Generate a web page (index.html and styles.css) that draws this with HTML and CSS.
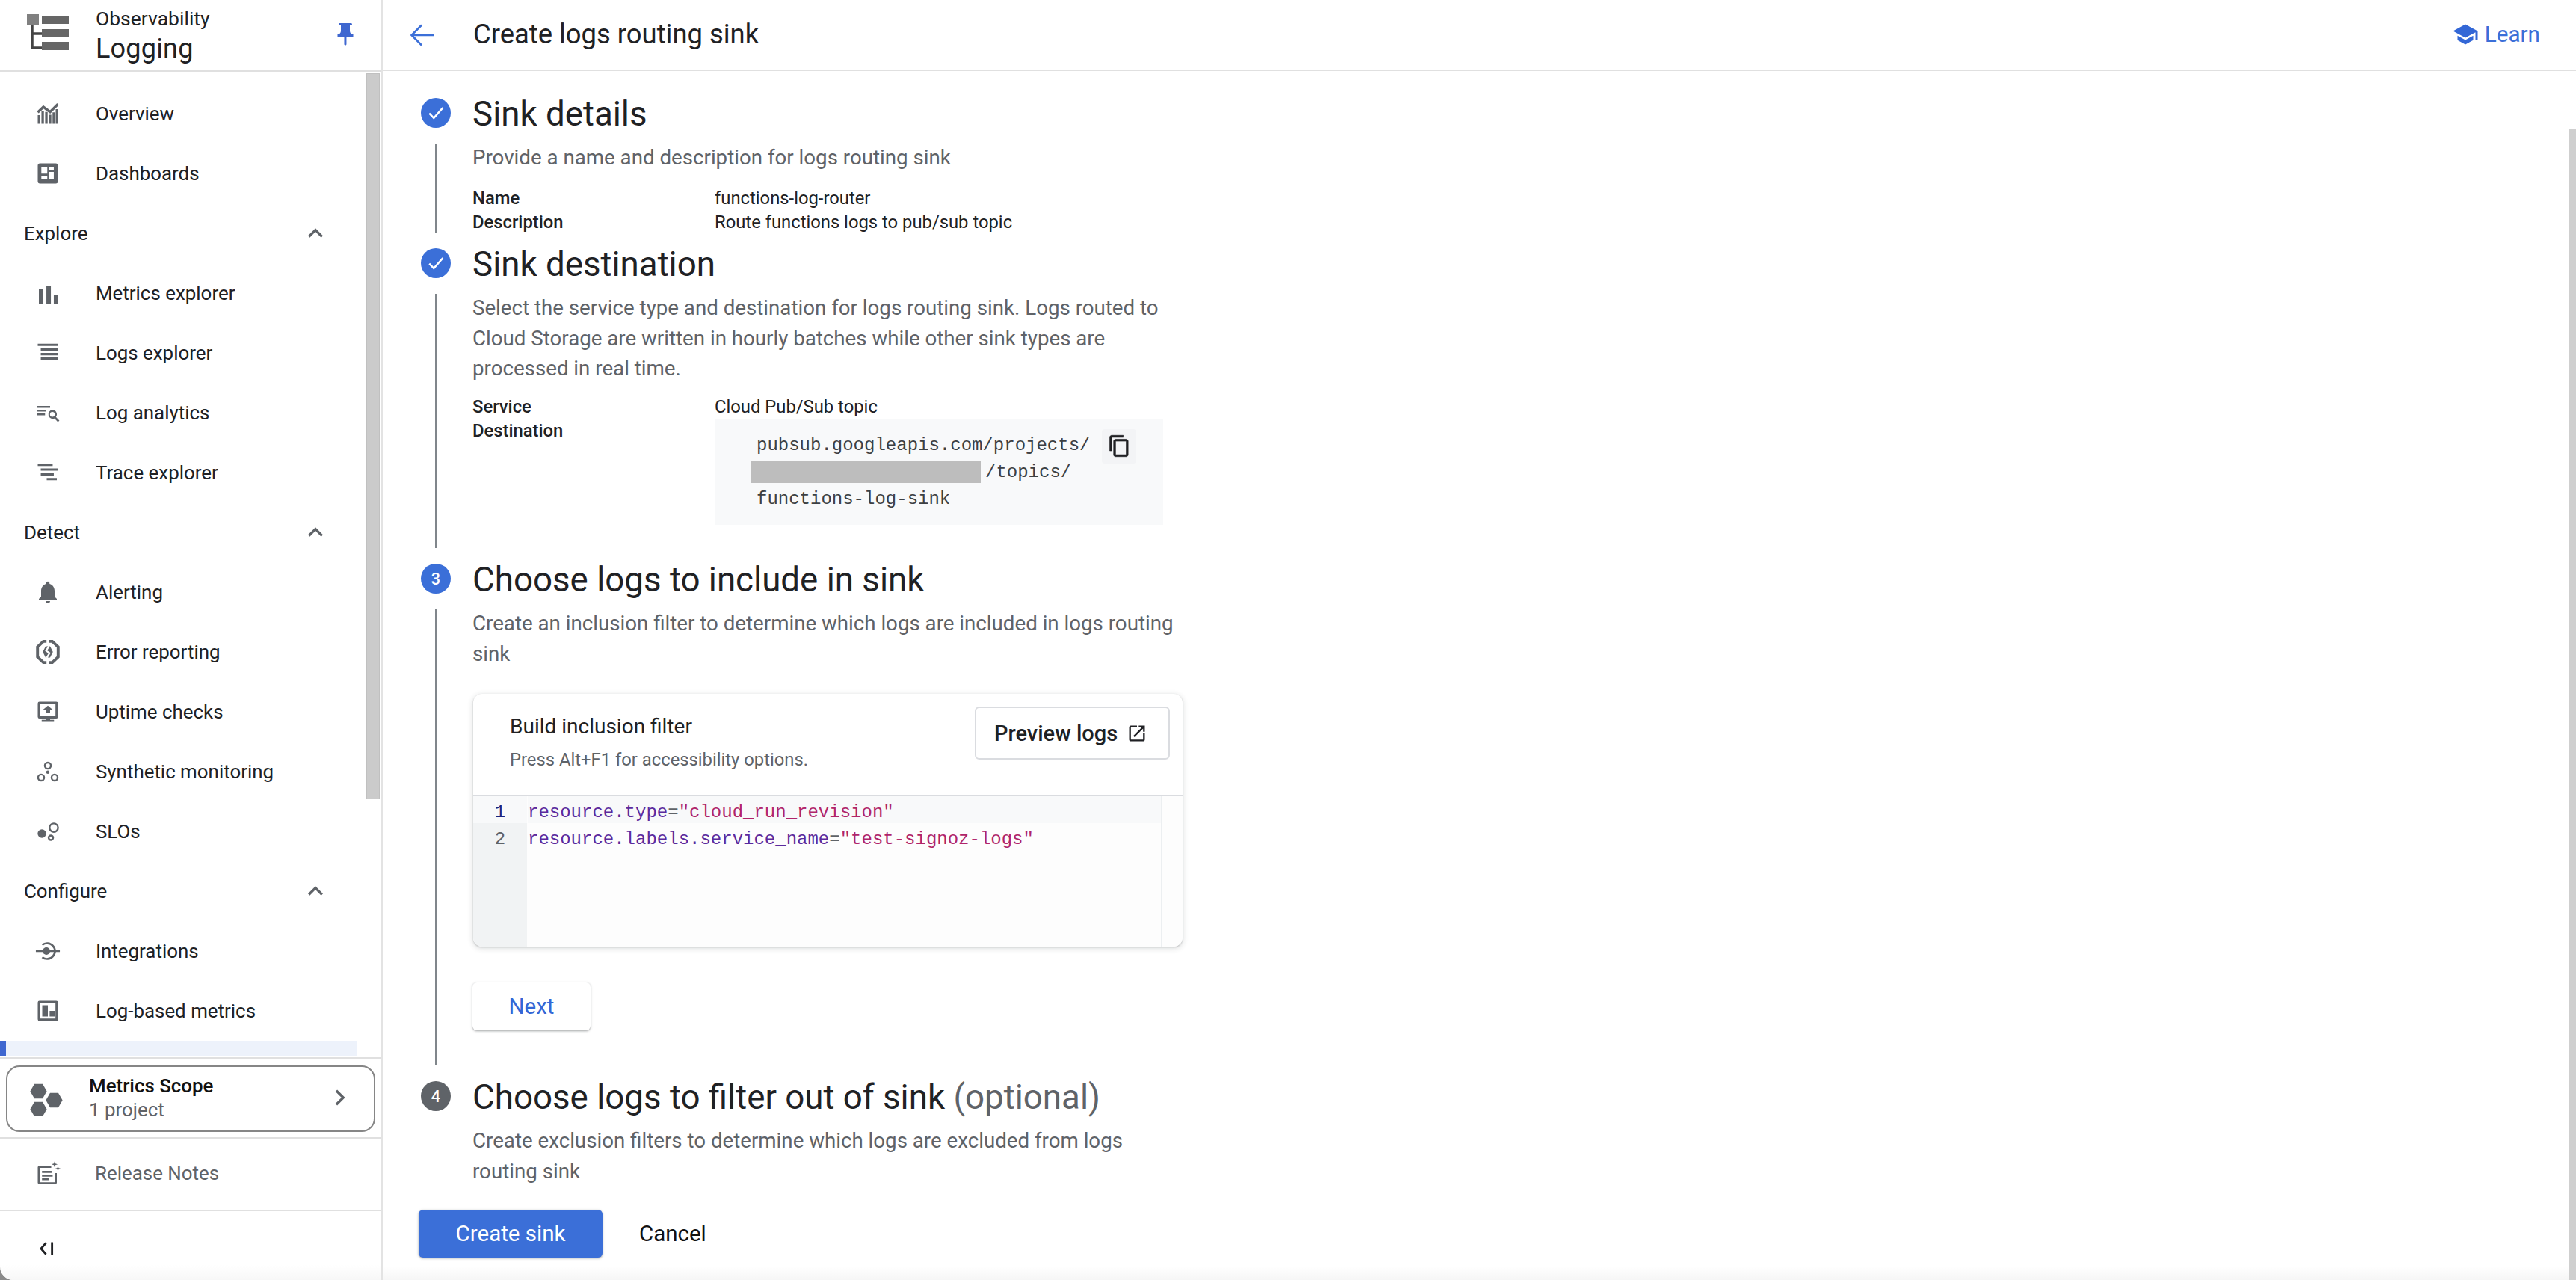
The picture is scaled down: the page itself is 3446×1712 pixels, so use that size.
FILE: index.html
```html
<!DOCTYPE html>
<html lang="en">
<head>
<meta charset="utf-8">
<title>Create logs routing sink</title>
<link rel="stylesheet" href="styles.css">
</head>
<body>
<div class="app">
  <aside class="sidebar">
    <header class="side-head">
      <svg class="logo" viewBox="0 0 56 54"><rect x="0" y="0" width="16" height="14" fill="#808080"/><rect x="20" y="2" width="36" height="11" fill="#666"/><rect x="20" y="20" width="36" height="11" fill="#666"/><rect x="20" y="37" width="36" height="11" fill="#666"/><path d="M7 14v31h13M7 26h13" fill="none" stroke="#444" stroke-width="3.500"/></svg>
      <div class="side-titles">
        <div class="side-kicker">Observability</div>
        <div class="side-title">Logging</div>
      </div>
      <svg class="pin" viewBox="0 0 24 24"><path d="M16 9V4h1c.55 0 1-.45 1-1s-.45-1-1-1H7c-.55 0-1 .45-1 1s.45 1 1 1h1v5c0 1.660-1.340 3-3 3v2h5.970v7l1 1 1-1v-7H19v-2c-1.660 0-3-1.340-3-3z"/></svg>
    </header>
    <nav class="nav">
      <div class="scrollthumb"></div>
      <a class="row"><svg class="ico" viewBox="0 0 24 24"><path d="M3 10.800l5-4.800 6 4.500 7-7" fill="none" stroke="#5f6368" stroke-width="2.300"/><path d="M3 13.300h2.200V21H3zM6.300 10h2.200v11H6.300zM9.600 10.500h2.200V21H9.600zM12.900 13h2.200v8h-2.200zM16.200 10.800h2.200V21h-2.200zM19 8h2.200v13H19z"/></svg><span>Overview</span></a>
      <a class="row"><svg class="ico" viewBox="0 0 24 24"><path fill-rule="evenodd" d="M5 3h14a2 2 0 0 1 2 2v14a2 2 0 0 1-2 2H5a2 2 0 0 1-2-2V5a2 2 0 0 1 2-2zm1.200 3.500v5.700h5.300V6.500zm0 7.500v3.300h5.300V14zM12.900 6.500V9h4.400V6.500zm0 4.200v6.600h4.400v-6.600z"/></svg><span>Dashboards</span></a>
      <div class="group"><span>Explore</span><svg class="chev" viewBox="0 0 24 24"><path d="M12 8l-6 6 1.410 1.410L12 10.830l4.590 4.580L18 14z"/></svg></div>
      <a class="row"><svg class="ico" viewBox="0 0 24 24"><path d="M4 8.700h4v12.600H4zM10.700 5.300h4v16h-4zM17.300 13.300h4v8h-4z"/></svg><span>Metrics explorer</span></a>
      <a class="row"><svg class="ico" viewBox="0 0 24 24"><path d="M3 3.800h18v2H3zM5.700 8H21v2.200H5.700zM5.700 12H21v2.200H5.700zM5.700 16H21v2.200H5.700z"/></svg><span>Logs explorer</span></a>
      <a class="row"><svg class="ico" viewBox="0 0 24 24"><path d="M2.500 6h11.500v1.700H2.500zM2.500 9.300h8v1.700h-8zM2.500 12.600h7v1.700h-7zM16 9.500a4 4 0 0 1 3.200 6.400l3.100 3.100-1.300 1.300-3.100-3.100A4 4 0 1 1 16 9.500zm0 1.900a2.100 2.100 0 1 0 0 4.200 2.100 2.100 0 0 0 0-4.200z"/></svg><span>Log analytics</span></a>
      <a class="row"><svg class="ico" viewBox="0 0 24 24"><path d="M3 4h13.300v2.100H3zM5.700 8.300h15.600v2.100H5.700zM5.700 12.600h11.600v2.100H5.700zM11 16.800h9v2.100h-9z"/></svg><span>Trace explorer</span></a>
      <div class="group"><span>Detect</span><svg class="chev" viewBox="0 0 24 24"><path d="M12 8l-6 6 1.410 1.410L12 10.830l4.590 4.580L18 14z"/></svg></div>
      <a class="row"><svg class="ico" viewBox="0 0 24 24"><path d="M12 22c1.100 0 2-.9 2-2h-4c0 1.100.89 2 2 2zm6-6v-5c0-3.070-1.640-5.640-4.500-6.320V4c0-.83-.67-1.500-1.500-1.500s-1.500.67-1.500 1.500v.68C7.630 5.360 6 7.920 6 11v5l-2 2v1h16v-1l-2-2z"/></svg><span>Alerting</span></a>
      <a class="row"><svg class="ico" viewBox="0 0 24 24"><path d="M10.800 2.600H8L2.800 7.500v9L8 21.400h2.800M13.200 2.600H16l5.200 4.900v9L16 21.400h-2.800" fill="none" stroke="#5f6368" stroke-width="2.600"/><path d="M7.500 12L10 7h4l2.500 5-2.500 5h-4z"/><path d="M13 6.800l-2.500 4.200 3 2-2.500 4.200" fill="none" stroke="#fff" stroke-width="1.500"/></svg><span>Error reporting</span></a>
      <a class="row"><svg class="ico" viewBox="0 0 24 24"><path fill-rule="evenodd" d="M4.500 3h15A1.500 1.500 0 0 1 21 4.500v12a1.500 1.500 0 0 1-1.500 1.500H14v1.200h3.500V21h-11v-1.800H10V18H4.500A1.500 1.500 0 0 1 3 16.500v-12A1.500 1.500 0 0 1 4.500 3zm.7 2.200v10.600h13.600V5.200zM12 6.500l5 4.200h-3v2.600h-4v-2.600H7z"/></svg><span>Uptime checks</span></a>
      <a class="row"><svg class="ico" viewBox="0 0 24 24"><g fill="none" stroke="#5f6368" stroke-width="1.600"><circle cx="12" cy="6.700" r="2.700"/><circle cx="6" cy="17.300" r="2.700"/><circle cx="18" cy="17.300" r="2.700"/></g><circle cx="12" cy="12.500" r="1.500"/></svg><span>Synthetic monitoring</span></a>
      <a class="row"><svg class="ico" viewBox="0 0 24 24"><circle cx="6.700" cy="14" r="3.800"/><g fill="none" stroke="#5f6368" stroke-width="1.600"><circle cx="17.300" cy="8.700" r="3.800"/><circle cx="14.700" cy="17.700" r="2"/></g></svg><span>SLOs</span></a>
      <div class="group"><span>Configure</span><svg class="chev" viewBox="0 0 24 24"><path d="M12 8l-6 6 1.410 1.410L12 10.830l4.590 4.580L18 14z"/></svg></div>
      <a class="row"><svg class="ico" viewBox="0 0 24 24"><path d="M1.300 11.100h21.400v1.800H1.300z"/><circle cx="10.700" cy="12" r="3.300"/><path d="M7 6.500a7 7 0 1 1 0 11" fill="none" stroke="#5f6368" stroke-width="1.800"/></svg><span>Integrations</span></a>
      <a class="row"><svg class="ico" viewBox="0 0 24 24"><path fill-rule="evenodd" d="M4.500 3h15A1.500 1.500 0 0 1 21 4.500v15a1.500 1.500 0 0 1-1.500 1.500h-15A1.500 1.500 0 0 1 3 19.500v-15A1.500 1.500 0 0 1 4.500 3zm.7 2.200v13.600h13.600V5.200zM7 7h5v10H7zm6.600 5H18v5h-4.400z"/></svg><span>Log-based metrics</span></a>
      <div class="row-selected"></div>
    </nav>
    <div class="scope-wrap">
      <button class="scope">
        <svg class="hexes" viewBox="0 0 44 44"><path d="M6 .8h11l5.600 9.700-5.600 9.700H6L.4 10.500z"/><path d="M6 .8h11l5.600 9.700-5.600 9.700H6L.4 10.500z" transform="translate(21 12)"/><path d="M6 .8h11l5.600 9.700-5.600 9.700H6L.4 10.500z" transform="translate(0 24)"/></svg>
        <span class="scope-text"><b>Metrics Scope</b><small>1 project</small></span>
        <svg class="scope-chev" viewBox="6 4 12 16"><path d="M9.400 5L7.800 6.600l5.400 5.400-5.400 5.400L9.400 19l7-7z"/></svg>
      </button>
    </div>
    <a class="release"><svg class="ico" viewBox="0 0 24 24"><path fill-rule="evenodd" d="M4.500 5.300h10.500V7.300H5v12.900h13V12h2v8.500a1.500 1.500 0 0 1-1.500 1.500h-14A1.500 1.500 0 0 1 3 20.500V6.800a1.500 1.500 0 0 1 1.500-1.500zM6.800 10h8.500v1.800H6.800zm0 3.300h9.500v1.800H6.800zm0 3.300h6v1.800h-6z"/><path d="M18 1.500l.7 2 2 .7-2 .7-.7 2-.7-2-2-.7 2-.7zM21 5.500l.6 1.900 1.900.6-1.900.6-.6 1.900-.6-1.900-1.900-.6 1.900-.6z"/></svg><span>Release Notes</span></a>
    <div class="collapse"><svg viewBox="0 0 20 18"><path d="M9 1L2 9l7 8" fill="none" stroke="#202124" stroke-width="3"/><path d="M16 0h3v18h-3z" fill="#202124"/></svg></div>
  </aside>

  <main class="main">
    <header class="topbar">
      <svg class="back" viewBox="0 0 32 32"><path d="M32 16H3M16 2.500L2.500 16 16 29.500" fill="none" stroke="#3b6fd8" stroke-width="2.600"/></svg>
      <h1>Create logs routing sink</h1>
      <a class="learn"><svg viewBox="0 0 24 24"><path d="M5 13.180v4L12 21l7-3.820v-4L12 17l-7-3.820zM12 3L1 9l11 6 9-4.910V17h2V9L12 3z"/></svg>Learn</a>
    </header>
    <div class="content">
      <div class="thumb-main"></div>

      <section class="step step-1">
        <div class="rail"><span class="badge"><svg viewBox="0 0 24 24"><path d="M5 12.500l4.800 5L19.500 6.500" fill="none" stroke="#fff" stroke-width="1.900"/></svg></span><i></i></div>
        <div class="step-body">
          <h2>Sink details</h2>
          <p class="desc">Provide a name and description for logs routing sink</p>
          <dl class="kv"><dt>Name</dt><dd>functions-log-router</dd><dt>Description</dt><dd>Route functions logs to pub/sub topic</dd></dl>
        </div>
      </section>

      <section class="step step-2">
        <div class="rail"><span class="badge"><svg viewBox="0 0 24 24"><path d="M5 12.500l4.800 5L19.500 6.500" fill="none" stroke="#fff" stroke-width="1.900"/></svg></span><i></i></div>
        <div class="step-body">
          <h2>Sink destination</h2>
          <p class="desc">Select the service type and destination for logs routing sink. Logs routed to<br>Cloud Storage are written in hourly batches while other sink types are<br>processed in real time.</p>
          <dl class="kv kv-dest">
            <dt>Service</dt><dd>Cloud Pub/Sub topic</dd>
            <dt>Destination</dt>
            <dd class="codebox">
              <div class="code-text">pubsub.googleapis.com/projects/<br><span class="redact"></span>/topics/<br>functions-log-sink</div>
              <span class="copy"><svg viewBox="0 0 24 24"><path d="M16 1H4c-1.100 0-2 .9-2 2v14h2V3h12V1zm3 4H8c-1.100 0-2 .9-2 2v14c0 1.100.9 2 2 2h11c1.100 0 2-.9 2-2V7c0-1.100-.9-2-2-2zm0 16H8V7h11v14z"/></svg></span>
            </dd>
          </dl>
        </div>
      </section>

      <section class="step step-3">
        <div class="rail"><span class="badge num">3</span><i></i></div>
        <div class="step-body">
          <h2>Choose logs to include in sink</h2>
          <p class="desc">Create an inclusion filter to determine which logs are included in logs routing<br>sink</p>
          <div class="card">
            <div class="card-head">
              <div class="card-titles"><div class="card-title">Build inclusion filter</div><div class="card-sub">Press Alt+F1 for accessibility options.</div></div>
              <button class="preview">Preview logs<svg viewBox="0 0 24 24"><path d="M19 19H5V5h7V3H5c-1.110 0-2 .9-2 2v14c0 1.100.89 2 2 2h14c1.100 0 2-.9 2-2v-7h-2v7zM14 3v2h3.590l-9.830 9.830 1.410 1.410L19 6.410V10h2V3h-7z"/></svg></button>
            </div>
            <div class="editor">
              <div class="gutter"><div class="ln ln-active">1</div><div class="ln">2</div></div>
              <div class="lines">
                <div class="cl cl-active"><span class="k">resource.type</span><span class="o">=</span><span class="s">"cloud_run_revision"</span></div>
                <div class="cl"><span class="k">resource.labels.service_name</span><span class="o">=</span><span class="s">"test-signoz-logs"</span></div>
              </div>
              <div class="minimap"></div>
            </div>
          </div>
          <button class="next">Next</button>
        </div>
      </section>

      <section class="step step-4">
        <div class="rail"><span class="badge num grey">4</span></div>
        <div class="step-body">
          <h2>Choose logs to filter out of sink <em>(optional)</em></h2>
          <p class="desc">Create exclusion filters to determine which logs are excluded from logs<br>routing sink</p>
        </div>
      </section>

      <footer class="actions">
        <button class="primary">Create sink</button>
        <button class="cancel">Cancel</button>
      </footer>
    </div>
  </main>
</div>
</body>
</html>
```
FILE: styles.css
```css
* { box-sizing: border-box; }
html, body { margin: 0; height: 100%; background: #8a8a8a; }
body { font-family: Roboto, "Liberation Sans", sans-serif; color: #202124; overflow: hidden; }
svg { display: block; fill: #5f6368; flex: none; }
button { font: inherit; cursor: pointer; }
h1, h2, p, dl, dd { margin: 0; }

.app { display: flex; height: 1712px; width: 3446px; background: #fff; border-bottom-left-radius: 18px; overflow: hidden; }

/* Sidebar */
.sidebar { width: 513px; flex: none; border-right: 3px solid #e3e3e3; display: flex; flex-direction: column; height: 100%; }
.side-head { height: 96px; flex: none; border-bottom: 2px solid #e0e0e0; display: flex; align-items: center; padding-left: 36px; }
.logo { width: 56px; height: 54px; margin-top: -3px; margin-right: 36px; }
.side-titles { flex: 1; margin-top: 4px; }
.side-kicker { font-size: 26.500px; line-height: 28px; }
.side-title { font-size: 36px; line-height: 44px; margin-top: 4px; letter-spacing: .2px; }
.pin { width: 36px; height: 36px; fill: #3f67d0; margin-right: 30px; margin-top: -2px; }

.nav { position: relative; height: 1318px; flex: none; padding-top: 16px; overflow: hidden; }
.scrollthumb { position: absolute; left: 490px; top: 2px; width: 18px; height: 971px; background: #cbcbcb; border: 1px solid #c0c0c0; }
.row, .group { display: flex; align-items: center; height: 80px; font-size: 25.900px; }
.row { padding-left: 46px; }
.row .ico { width: 36px; height: 36px; margin-right: 46px; }
.group { padding-left: 32px; justify-content: space-between; padding-right: 68px; }
.chev { width: 40px; height: 40px; }
.row-selected { height: 20px; width: 478px; background: #edf2fb; border-left: 8px solid #3f67d0; }

.scope-wrap { height: 109px; flex: none; border-top: 2px solid #e0e0e0; border-bottom: 2px solid #e0e0e0; padding: 9px 7px 0 8px; }
.scope { display: flex; align-items: center; width: 494px; height: 89px; padding: 0 36px 0 30px; background: #fff; border: 2px solid #868686; border-radius: 18px; text-align: left; color: #202124; }
.hexes { width: 44px; height: 44px; margin-right: 35px; margin-top: 2px; }
.scope-text { flex: 1; display: flex; flex-direction: column; margin-top: -4px; }
.scope-text b { font-weight: 500; font-size: 25.900px; line-height: 32px; color: #111; }
.scope-text small { font-size: 25.900px; line-height: 32px; color: #5f6368; }
.scope-chev { width: 18px; height: 30px; margin-top: -4px; }

.release { display: flex; align-items: center; height: 97px; flex: none; border-bottom: 2px solid #e0e0e0; padding: 0 0 3px 46px; font-size: 25.900px; color: #5f6368; }
.release .ico { width: 36px; height: 36px; margin-right: 45px; }
.collapse { flex: 1; padding: 41px 0 0 53px; background: linear-gradient(transparent calc(100% - 20px), #f7f7f7); }
.collapse svg { width: 19px; height: 18px; }

/* Main */
.main { flex: 1; min-width: 0; display: flex; flex-direction: column; }
.topbar { height: 95px; flex: none; display: flex; align-items: center; border-bottom: 2px solid #e0e0e0; padding: 0 48px 0 35px; }
.back { width: 32px; height: 32px; margin-right: 53px; }
.topbar h1 { flex: 1; font-weight: 400; font-size: 36.400px; color: #202124; margin-top: -2px; }
.learn { display: flex; align-items: center; color: #3b6fd8; font-size: 29.700px; margin-top: -2px; }
.learn svg { width: 36px; height: 36px; fill: #3367d6; margin-right: 8px; }

.content { position: relative; flex: 1; padding: 36px 0 0 50px; overflow: hidden; }
.thumb-main { position: absolute; right: 0; top: 78px; bottom: 0; width: 10px; background: #cfcfcf; z-index: 2; }

.step { display: grid; grid-template-columns: 40px 1fr; column-gap: 29px; }
.step-1 { height: 201px; }
.step-2 { height: 422px; }
.step-3 { height: 692px; }
.rail { display: flex; flex-direction: column; align-items: center; }
.rail i { display: block; flex: 1; width: 2px; background: #80868b; margin: 21px 0 21px; }
.badge { width: 40px; height: 40px; flex: none; border-radius: 50%; background: #3b6fd8; display: flex; align-items: center; justify-content: center; color: #fff; font-size: 21.600px; font-weight: 500; }
.badge svg { width: 30px; height: 30px; }
.badge.grey { background: #5f6368; }

.step-body { width: 1100px; }
h2 { font-weight: 400; font-size: 45.700px; height: 40px; line-height: 44px; color: #202124; white-space: nowrap; }
h2 em { font-style: normal; color: #5f6368; }
.desc { font-size: 27.700px; line-height: 40.500px; color: #5f6368; margin-top: 20px; }
.kv { display: grid; grid-template-columns: 324px 1fr; font-size: 23.800px; line-height: 32px; margin-top: 17px; }
.kv dt { font-weight: 500; color: #202124; }
.kv-dest { margin-top: 14px; }
.codebox { position: relative; width: 600px; height: 142px; background: #f8f9fa; padding: 18px 0 0 56px; }
.code-text { font-family: "Liberation Mono", "DejaVu Sans Mono", monospace; font-size: 24px; line-height: 36px; color: #3c4043; }
.redact { display: inline-block; width: 307px; height: 30px; background: #bdbdbd; margin-left: -7px; margin-right: 6px; vertical-align: middle; }
.copy { position: absolute; left: 518px; top: 14px; width: 46px; height: 46px; display: flex; align-items: center; justify-content: center; background: #f3f4f6; border-radius: 4px; }
.copy svg { width: 31px; height: 31px; fill: #202124; stroke: #202124; stroke-width: .5; }

.card { width: 949px; height: 338px; margin: 33px 0 0 1px; border-radius: 12px; background: #fff; box-shadow: 0 1px 2px rgba(60,64,67,.3), 0 2px 6px 2px rgba(60,64,67,.12); overflow: hidden; display: flex; flex-direction: column; }
.card-head { height: 137px; flex: none; display: flex; justify-content: space-between; border-bottom: 2px solid #dadce0; padding: 17px 17px 0 49px; }
.card-title { font-size: 28px; line-height: 32px; margin-top: 11px; }
.card-sub { font-size: 23.800px; line-height: 28px; color: #5f6368; margin-top: 14px; }
.preview { display: flex; align-items: center; height: 71px; width: 261px; padding: 0 0 0 24px; background: #fff; border: 2px solid #dadce0; border-radius: 6px; font-size: 29px; font-weight: 500; color: #202124; white-space: nowrap; }
.preview svg { width: 28px; height: 28px; fill: #202124; margin-left: 12px; }

.editor { flex: 1; display: flex; background: #fdfdfd; font-family: "Liberation Mono", "DejaVu Sans Mono", monospace; font-size: 24px; }
.gutter { width: 72px; background: #f1f3f4; flex: none; }
.ln, .cl { height: 36px; line-height: 44px; white-space: nowrap; }
.ln { text-align: center; color: #5f6368; }
.ln-active { color: #1a237e; background: #f8f9fa; }
.lines { flex: 1; padding-left: 1px; }
.cl-active { background: #f8f9fa; }
.k { color: #5b2a9d; }
.o { color: #5f6368; }
.s { color: #b0246a; }
.minimap { width: 29px; flex: none; border-left: 2px solid #eceff1; }

.next { display: block; width: 158px; height: 64px; margin-top: 48px; background: #fff; border: 0; border-radius: 6px; color: #3367d6; font-size: 29.500px; font-weight: 400; box-shadow: 0 1px 2px rgba(60,64,67,.3), 0 1px 3px 1px rgba(60,64,67,.15); }

.actions { position: absolute; left: 0; right: 0; bottom: 0; height: 118px; padding: 24px 0 0 47px; display: flex; gap: 49px; align-items: flex-start; background: linear-gradient(#fff 0, #fff 84%, #f6f6f6 100%); }
.primary { width: 246px; height: 64px; background: #3b6fd8; border: 0; border-radius: 6px; color: #fff; font-size: 29.500px; font-weight: 400; box-shadow: 0 1px 2px rgba(60,64,67,.3), 0 1px 3px 1px rgba(60,64,67,.15); }
.cancel { height: 64px; background: none; border: 0; padding: 0; font-size: 29.500px; font-weight: 400; color: #111; }
```
